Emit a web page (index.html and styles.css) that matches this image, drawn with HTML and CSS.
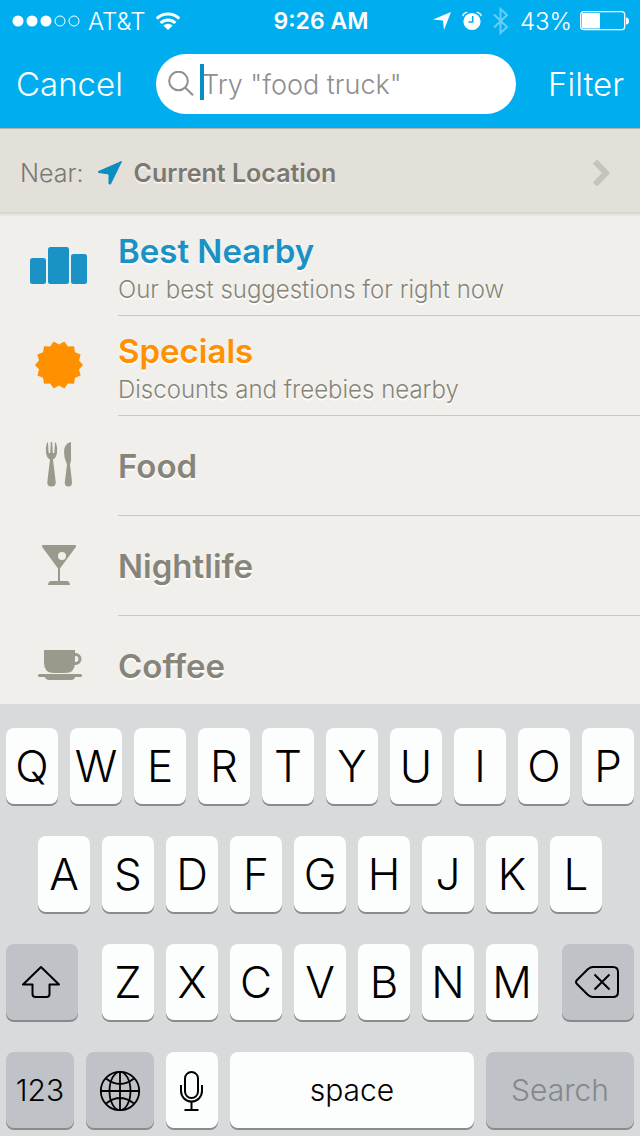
FILE: index.html
```html
<!DOCTYPE html>
<html lang="en">
<head>
<meta charset="utf-8">
<meta name="viewport" content="width=device-width, initial-scale=1">
<title>Search</title>
<link rel="stylesheet" href="styles.css">
</head>
<body>
<div class="app">
  <header class="header">
    <div class="status">
      <div class="status-side">
        <svg class="signal" width="68" height="14" viewBox="0 0 68 14" aria-hidden="true">
          <g fill="#fff"><circle cx="6" cy="7" r="5.5"/><circle cx="20" cy="7" r="5.5"/><circle cx="34" cy="7" r="5.5"/></g>
          <g fill="none" stroke="#fff"><circle cx="48" cy="7" r="5"/><circle cx="62" cy="7" r="5"/></g>
        </svg>
        <span class="carrier">AT&amp;T</span>
        <svg class="wifi" width="26" height="20" viewBox="0 0 26 20" aria-hidden="true">
          <g fill="none" stroke="#fff" stroke-width="3"><path d="M1.8 7.6a16 16 0 0 1 22.4 0"/><path d="M5.6 12a10.500 10.500 0 0 1 14.800 0"/></g>
          <path fill="#fff" d="M13 19l-4.500-4.300a6.200 6.200 0 0 1 9 0z"/>
        </svg>
      </div>
      <span class="clock">9:26 AM</span>
      <div class="status-side status-right">
        <svg class="loc" width="20" height="20" viewBox="0 0 20 20" aria-hidden="true"><path fill="#fff" d="M19 1L12 19 11 9.500 1 8.500z"/></svg>
        <svg class="alarm" width="20" height="20" viewBox="0 0 20 20" aria-hidden="true">
          <circle cx="10" cy="10.500" r="8.600" fill="#fff"/>
          <path fill="none" stroke="#fff" stroke-width="1.400" d="M.8 5.200Q1.600 1.800 5.300 1.400M19.200 5.200Q18.400 1.800 14.700 1.400"/>
          <path fill="none" stroke="#00aeef" stroke-width="1.600" d="M10.700 5v6H6.500"/>
        </svg>
        <svg class="bt" width="18" height="28" viewBox="0 0 18 28" aria-hidden="true"><path fill="none" stroke="#66cef5" stroke-width="2" d="M2 7.500l13 12.500-6.500 6V2L15 8 2 20.500"/></svg>
        <span>43%</span>
        <svg class="battery" width="50" height="20" viewBox="0 0 50 20" aria-hidden="true">
          <rect x=".7" y=".7" width="44" height="18" rx="3" fill="none" stroke="#fff" stroke-width="1.300"/>
          <rect x="2" y="2" width="18" height="15.500" rx="1" fill="#fff"/>
          <path fill="#fff" d="M46 6.500q3 0 3 3.500t-3 3.500z"/>
        </svg>
      </div>
    </div>
    <div class="nav">
      <button class="nav-btn" type="button">Cancel</button>
      <label class="search">
        <svg width="26" height="26" viewBox="0 0 26 26" aria-hidden="true"><g fill="none" stroke="#8e8e93" stroke-width="2"><circle cx="10.500" cy="10" r="9.300"/><path d="M17 16.500l8 7.800"/></g></svg>
        <span class="caret"></span>
        <input class="search-input" type="text" aria-label="Search" placeholder='Try "food truck"'>
      </label>
      <button class="nav-btn nav-filter" type="button">Filter</button>
    </div>
  </header>

  <button class="near" type="button">
    <span class="near-label">Near:</span>
    <svg class="near-arrow" width="24" height="24" viewBox="0 0 24 24" aria-hidden="true"><path fill="#0b8dbf" stroke="#0b8dbf" stroke-linejoin="round" d="M23.500 .5L12.500 23H11V14L10 12.800 .5 11.500V10.500z"/></svg>
    <span class="near-place">Current Location</span>
    <svg class="chevron" width="20" height="28" viewBox="0 0 20 28" aria-hidden="true"><path fill="none" stroke="#c4c3bc" stroke-width="6" d="M3 2.500L14 14 3 25.500"/></svg>
  </button>

  <ul class="list">
    <li class="item">
      <svg class="item-icon" width="60" height="60" viewBox="0 0 60 60" aria-hidden="true"><g fill="#1b92c6"><rect x="1" y="22" width="16" height="26" rx="2.500"/><rect x="19" y="11" width="21" height="37" rx="2.500"/><rect x="42" y="18" width="16" height="30" rx="2.500"/></g></svg>
      <a class="item-body item-detailed" href="#best"><span class="title title-blue">Best Nearby</span><span class="sub">Our best suggestions for right now</span></a>
    </li>
    <li class="item">
      <svg class="item-icon" width="60" height="60" viewBox="0 0 60 60" aria-hidden="true"><path fill="#ff9000" transform="translate(30 29)" d="M24 0L20 4.600 21.600 10.400 16 12.800 15 18.800 8.900 18.500 5.300 23.400 0 20.500-5.300 23.400-8.900 18.500-15 18.800-16 12.800-21.600 10.400-20 4.600-24 0-20-4.600-21.600-10.400-16-12.800-15-18.800-8.900-18.500-5.300-23.400 0-20.500 5.300-23.400 8.900-18.500 15-18.800 16-12.800 21.600-10.400 20-4.600z"/></svg>
      <a class="item-body item-detailed" href="#specials"><span class="title title-orange">Specials</span><span class="sub">Discounts and freebies nearby</span></a>
    </li>
    <li class="item">
      <svg class="item-icon" width="60" height="60" viewBox="0 0 60 60" aria-hidden="true"><g fill="#9b998c">
        <path d="M18 6.500h1l.7 10.500h1.500L21.800 6h1.400l.6 11h1.500L26 6.500h1q1.800 6 1 10.500-.8 5-4 6.500l2.700 22.500q.3 4.500-4.200 4.500T18.300 46L21 23.500q-3.200-1.500-4-6.500-.8-4.500 1-10.500z"/>
        <path d="M42 6v18.500l-1 4L43 46q.3 4.500-3.600 4.500T35.800 46l2.200-17.500Q34.800 22 35 15.500 35.500 7 42 6z"/>
      </g></svg>
      <a class="item-body" href="#food"><span class="title">Food</span></a>
    </li>
    <li class="item">
      <svg class="item-icon" width="60" height="60" viewBox="0 0 60 60" aria-hidden="true"><path fill="#9b998c" d="M13.500 9h33q1 1 .3 2L31 32.500V45h7q2.500 0 3 4H19q.5-4 3-4h7V32.500L13.200 11q-.7-1 .3-2z"/><circle cx="33" cy="20" r="4" fill="#f1efeb"/></svg>
      <a class="item-body" href="#nightlife"><span class="title">Nightlife</span></a>
    </li>
    <li class="item">
      <svg class="item-icon" width="60" height="60" viewBox="0 0 60 60" aria-hidden="true"><g fill="#9b998c"><path d="M15 14h31v13q0 10-10 10H25q-10 0-10-10z"/><rect x="9" y="38" width="44" height="3" rx="1.500"/><path d="M15.500 40.500h31q-1.500 3.500-4 3.500H20q-3 0-4.500-3.500z"/></g><path fill="none" stroke="#9b998c" stroke-width="3" d="M45 18.500h1.500a4.500 4.500 0 0 1 0 9H45"/></svg>
      <a class="item-body" href="#coffee"><span class="title">Coffee</span></a>
    </li>
  </ul>

  <div class="keyboard">
    <div class="keys">
      <button class="key">Q</button><button class="key">W</button><button class="key">E</button><button class="key">R</button><button class="key">T</button><button class="key">Y</button><button class="key">U</button><button class="key">I</button><button class="key">O</button><button class="key">P</button>
    </div>
    <div class="keys keys-inset">
      <button class="key">A</button><button class="key">S</button><button class="key">D</button><button class="key">F</button><button class="key">G</button><button class="key">H</button><button class="key">J</button><button class="key">K</button><button class="key">L</button>
    </div>
    <div class="keys keys-shift">
      <button class="key key-dark key-first" aria-label="Shift"><svg width="40" height="34" viewBox="0 0 40 34" aria-hidden="true"><path fill="none" stroke="#000" stroke-width="2" stroke-linejoin="round" d="M19 2L1 19.500h9.500V29q0 3 3 3h11q3 0 3-3v-9.500H37z"/></svg></button>
      <button class="key">Z</button><button class="key">X</button><button class="key">C</button><button class="key">V</button><button class="key">B</button><button class="key">N</button><button class="key">M</button>
      <button class="key key-dark key-last" aria-label="Delete"><svg width="46" height="34" viewBox="0 0 46 34" aria-hidden="true"><path fill="none" stroke="#000" stroke-width="2" stroke-linejoin="round" d="M1 17q0-1 1-2L13 4q2.500-2 5-2h20q5 0 5 5v20q0 5-5 5H18q-2.500 0-5-2L2 19q-1-1-1-2zM19.500 9.500l15 15M34.500 9.500l-15 15"/></svg></button>
    </div>
    <div class="keys keys-bottom">
      <button class="key key-dark key-word">123</button>
      <button class="key key-dark" aria-label="Next keyboard"><svg width="42" height="42" viewBox="0 0 42 42" aria-hidden="true"><g fill="none" stroke="#000" stroke-width="1.800"><circle cx="21" cy="22" r="19.200"/><ellipse cx="21" cy="22" rx="10.500" ry="19.200"/><path d="M21 3v38M2 22h38M7 9.500q14 11 28 0M7 34.500q14-11 28 0"/></g></svg></button>
      <button class="key" aria-label="Dictate"><svg width="24" height="42" viewBox="0 0 24 42" aria-hidden="true"><g fill="none" stroke="#000" stroke-width="2"><rect x="5" y="3" width="13" height="26" rx="6.500"/><path d="M1 16v6a10.500 10.500 0 0 0 21 0v-6M11.500 33v8M4.500 41h14"/></g></svg></button>
      <button class="key key-word">space</button>
      <button class="key key-dark key-word key-muted">Search</button>
    </div>
  </div>
</div>
</body>
</html>
```
FILE: styles.css
```css
* { box-sizing: border-box; }

body {
  margin: 0;
  font-family: Inter, "Liberation Sans", Arial, sans-serif;
}

button {
  margin: 0;
  padding: 0;
  border: 0;
  background: none;
  font: inherit;
  color: inherit;
}

svg { display: block; flex: none; }

.app {
  display: flex;
  flex-direction: column;
  height: 100vh;
  background: #f1efeb;
}

/* Header */
.header { background: #00aeef; color: #fff; }

.status {
  display: grid;
  grid-template-columns: 1fr auto 1fr;
  align-items: center;
  height: 40px;
  padding: 2px 10px 0 12px;
  font-size: 24px;
  font-weight: 300;
}
.status-side { display: flex; align-items: center; gap: 8px; }
.status-right { justify-content: flex-end; gap: 10px; }
.carrier { margin-right: 2px; }
.clock { font-size: 23px; font-weight: 600; }
.battery { margin-left: -2px; }

.nav {
  display: grid;
  grid-template-columns: 156px minmax(0, 1fr) 124px;
  align-items: center;
  height: 88px;
}
.nav-btn {
  padding: 0 16px;
  font-size: 33px;
  font-weight: 300;
  text-align: left;
}
.nav-filter { text-align: right; }

.search {
  position: relative;
  display: flex;
  align-items: center;
  gap: 8px;
  height: 60px;
  padding: 0 20px 0 12px;
  border-radius: 30px;
  background: #fff;
}
.caret {
  position: absolute;
  left: 44px;
  top: 10px;
  width: 4px;
  height: 36px;
  background: #0b8dbf;
}
.search-input {
  flex: 1;
  min-width: 0;
  padding: 0;
  border: 0;
  outline: 0;
  background: none;
  font: inherit;
  font-size: 27px;
  font-weight: 300;
}
.search-input::placeholder { color: #8e8e93; opacity: 1; }

/* Location */
.near {
  display: flex;
  flex: none;
  align-items: center;
  height: 88px;
  padding: 2px 28px 0 20px;
  border-top: 1px solid #b5b3ab;
  border-bottom: 2px solid #e9e6df;
  background: #e3e0da;
  box-shadow: inset 0 -2px #d9d6ce;
  font-size: 25px;
  color: #7b7872;
}
.near-label { font-weight: 300; }
.near-arrow { margin: 0 12px 0 14px; }
.near-place { flex: 1; font-weight: 600; text-align: left; text-shadow: 0 2px #f4f2ee; }

/* Categories */
.list {
  flex: 1;
  min-height: 0;
  margin: 0;
  padding: 0;
  overflow: hidden;
  list-style: none;
}
.item { display: flex; align-items: center; height: 100px; padding-left: 29px; }
.item-icon { margin-right: 29px; }
.item-body {
  display: flex;
  flex: 1;
  flex-direction: column;
  justify-content: center;
  height: 100px;
  border-bottom: 1px solid #c8c7cc;
  color: #87857a;
  text-decoration: none;
  text-shadow: 0 2px #fff;
}
.item-detailed { padding-top: 8px; }
.title { font-size: 33px; font-weight: 600; line-height: 40px; }
.title-blue { color: #1b92c6; }
.title-orange { color: #ff9000; }
.sub {
  font-size: 24px;
  font-weight: 300;
  line-height: 38px;
}

/* Keyboard */
.keyboard {
  display: flex;
  flex: none;
  flex-direction: column;
  gap: 32px;
  padding: 24px 6px 8px;
  background: #d8dadc;
}
.keys { display: grid; grid-template-columns: repeat(10, 1fr); gap: 12px; }
.keys-inset { grid-template-columns: repeat(9, 1fr); padding: 0 32px; }
.keys-shift { grid-template-columns: 84fr repeat(7, 52fr) 84fr; }
.keys-bottom { grid-template-columns: 68fr 68fr 52fr 244fr 148fr; }
.key {
  display: flex;
  align-items: center;
  justify-content: center;
  min-width: 0;
  height: 76px;
  border-radius: 8px;
  background: #fcfdfd;
  box-shadow: 0 2px #888a8c;
  font-size: 44px;
  font-weight: 300;
  color: #000;
}
.key-dark { background: #bfc2c6; }
.key-first { margin-right: 12px; }
.key-last { margin-left: 12px; }
.key-word { font-size: 30px; }
.key-muted { color: #85878a; }
```
